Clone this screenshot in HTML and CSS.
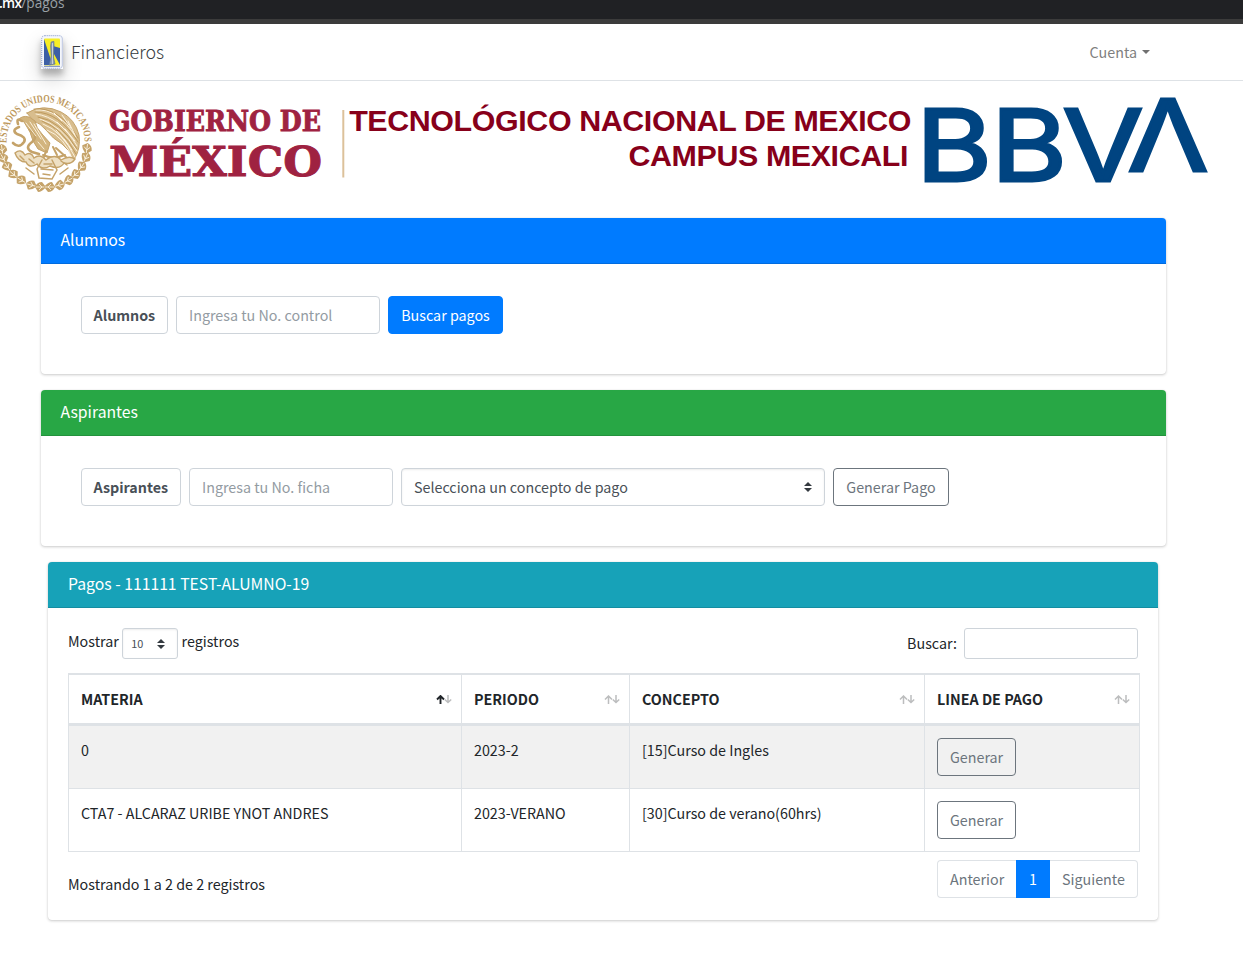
FILE: index.html
```html
<!DOCTYPE html>
<html lang="es">
<head>
<meta charset="utf-8">
<title>Financieros</title>
<link rel="stylesheet" href="styles.css">
</head>
<body>
<div class="browser-bar"><div class="url"><b>.mx</b><span>/pagos</span></div></div>
<nav class="navbar">
  <a class="brand">
    <svg class="brand-logo" viewBox="0 0 22 34" width="22" height="34">
      <rect width="22" height="34" rx="2" fill="#f4f6fb"/>
      <rect x=".7" y=".7" width="20.6" height="32.6" rx="3" fill="none" stroke="#8497c6" stroke-dasharray="1 1"/>
      <rect x="3" y="3.5" width="16" height="27" rx="1" fill="#f6ee25"/>
      <path d="M3 4 9 22 10 30H3zM12 11 19 13V30L13 19z" fill="#3c5fa5"/>
      <path d="M10.2 7 12.8 6.4 13 11 12.4 22 14 29 8 30 10.3 21 9.7 11z" fill="#8d9cae" stroke="#5470a0" stroke-width=".7"/>
      <path d="M11.5 8V29" stroke="#e6e9e5" stroke-width=".7"/>
      <path d="M3 31.3H19" stroke="#6c83bb" stroke-width="1"/>
    </svg>
    <span class="brand-text">Financieros</span>
  </a>
  <a class="account">Cuenta<i class="caret"></i></a>
</nav>

<header class="banner">
  <svg class="gob" viewBox="0 85 346 115" width="346" height="115">
    <defs>
      <path id="arc" d="M6.500 143L6.500 141A39 39 0 0 1 84.500 141L84.500 143"/>
      <g id="leaf"><path d="M0-5Q5-3 5 2L0 6Q-5 2-5-2Z" fill="#c5a36a"/><path d="M0-4V5M-3-1 0 2 3-1" stroke="#fff8e9" stroke-width=".8" fill="none"/></g>
    </defs>
    <text class="seal-text"><textPath href="#arc" textLength="125" lengthAdjust="spacingAndGlyphs">ESTADOS UNIDOS MEXICANOS</textPath></text>
    <g>
      <use href="#leaf" transform="translate(2 149) rotate(-8)"/><use href="#leaf" transform="translate(3 158) rotate(-30)"/>
      <use href="#leaf" transform="translate(7 166) rotate(-35)"/><use href="#leaf" transform="translate(13 174) rotate(-50)"/>
      <use href="#leaf" transform="translate(21 180) rotate(-60)"/><use href="#leaf" transform="translate(31 185) rotate(-75)"/>
      <use href="#leaf" transform="translate(40 187) rotate(-90)"/><use href="#leaf" transform="translate(50 187) rotate(90)"/>
      <use href="#leaf" transform="translate(60 185) rotate(75)"/><use href="#leaf" transform="translate(69 180) rotate(60)"/>
      <use href="#leaf" transform="translate(76 174) rotate(50)"/><use href="#leaf" transform="translate(82 166) rotate(35)"/>
      <use href="#leaf" transform="translate(86 157) rotate(25)"/><use href="#leaf" transform="translate(87 148) rotate(8)"/>
    </g>
    <g fill="none" stroke="#c5a36a" stroke-linecap="round">
      <path d="M27 113Q43 103 61 112 75 119 79 135 81 148 74 160 70 150 62 144 53 139 46 130 40 123 34 121 30 117 27 113Z" fill="#d8bd8d"/>
      <path d="M18 120Q22 115 29 117L35 121Q36 128 42 134L50 143 47 153 38 149Q32 141 30 132L24 122Z" fill="#d2b47e"/>
      <path d="M36 110Q58 108 76 137M36 114Q60 117 77 146M40 119Q61 125 77 151M43 124Q62 131 75 157M47 130Q65 137 73 160" stroke="#fff6e4" stroke-width=".9"/>
      <path d="M34 109Q59 106 78 138M35 112Q59 112 78 142M38 117Q60 120 77 149M42 121Q63 129 76 154" stroke="#b8914f" stroke-width=".8"/>
      <path d="M54 113 62 121M62 115 71 128M68 121 75 135M57 122 67 132M65 129 75 141M56 130 66 142M64 139 72 150" stroke="#fff6e4" stroke-width="1"/>
      <path d="M22 121Q16 117 18 124M19 127Q11 130 17 134 27 137 24 142 19 149 13 143M30 130Q39 136 32 142 24 148 32 152L39 154" stroke-width="2.600"/>
      <path d="M26 123 36 136M30 122 41 139M34 124 46 144M38 142 44 149" stroke="#fff6e4" stroke-width=".9"/>
      <path d="M46 151 44 157M53 147 57 155M56 148 66 157M43 155Q53 160 65 155" stroke-width="2"/>
      <path d="M15 153Q21 148 25 155 31 151 34 158 40 153 46 160 55 153 61 160 69 155 75 159 71 165 64 163 60 170 50 166 42 171 37 164 29 169 26 162 18 162 15 153Z" fill="#eee0c4" stroke-width="1.400"/>
      <path d="M20 156 24 160M29 159 34 163M42 160 37 169 39 178 52 179 57 170 52 160M44 164 52 164M41 169 53 170M43 174 50 175M61 161 67 165M26 168 34 174M60 174 68 168" stroke-width="1.500"/>
    </g>
    <g class="gob-text">
      <text x="109" y="130.500" font-size="27" textLength="212" lengthAdjust="spacingAndGlyphs">GOBIERNO DE</text>
      <text x="109" y="175.500" font-size="41" textLength="213" lengthAdjust="spacingAndGlyphs">MÉXICO</text>
    </g>
    <path d="M343.300 110V177.500" stroke="#dcc19a" stroke-width="2"/>
  </svg>
  <div class="campus">TECNOLÓGICO NACIONAL DE MEXICO<br><span class="campus-name">CAMPUS MEXICALI</span></div>
  <svg class="bbva" viewBox="917 85 300 115" width="300" height="115">
    <g class="bbva-text">
      <text x="916" y="180.700" textLength="76" lengthAdjust="spacingAndGlyphs">B</text>
      <text x="991" y="180.700" textLength="76" lengthAdjust="spacingAndGlyphs">B</text>
      <text x="1062.500" y="180.700" textLength="81" lengthAdjust="spacingAndGlyphs">V</text>
      <text x="1127.500" y="170.700" textLength="81" lengthAdjust="spacingAndGlyphs">Λ</text>
    </g>
  </svg>
</header>

<main class="content">
  <section class="card">
    <h3 class="card-header blue">Alumnos</h3>
    <div class="form-row">
      <span class="field tag alumnos-tag">Alumnos</span>
      <input class="field entry" placeholder="Ingresa tu No. control">
      <button class="field btn-primary">Buscar pagos</button>
    </div>
  </section>
  <section class="card">
    <h3 class="card-header green">Aspirantes</h3>
    <div class="form-row">
      <span class="field tag aspirantes-tag">Aspirantes</span>
      <input class="field entry" placeholder="Ingresa tu No. ficha">
      <div class="field select"><span>Selecciona un concepto de pago</span>
        <svg class="updown" viewBox="0 0 8 10" width="8" height="10"><path d="M4 0 8 4H0zM0 6H8L4 10z" fill="#343a40"/></svg></div>
      <button class="field btn-outline pay">Generar Pago</button>
    </div>
  </section>
  <section class="card payments">
    <h3 class="card-header teal">Pagos - 111111 TEST-ALUMNO-19</h3>
    <div class="card-body">
      <div class="tools">
        <div class="length"><span>Mostrar</span>
          <div class="mini-select"><span>10</span><svg class="updown" viewBox="0 0 8 10" width="8" height="10"><path d="M4 0 8 4H0zM0 6H8L4 10z" fill="#343a40"/></svg></div>
          <span>registros</span></div>
        <label class="search"><span>Buscar:</span><input class="search-input"></label>
      </div>
      <table class="grid">
        <colgroup><col class="c1"><col class="c2"><col class="c3"><col class="c4"></colgroup>
        <thead><tr>
          <th><div class="th"><span>MATERIA</span><svg class="sort asc" viewBox="0 0 16 9" width="16" height="9"><path class="up" d="M4.500 9V1.500M1 4.500 4.500 1 8 4.500"/><path class="down" d="M12 0V7M8.800 4.500 12 7.500 15.200 4.500"/></svg></div></th>
          <th><div class="th"><span>PERIODO</span><svg class="sort" viewBox="0 0 16 9" width="16" height="9"><path class="up" d="M4.500 9V1.500M1 4.500 4.500 1 8 4.500"/><path class="down" d="M12 0V7M8.800 4.500 12 7.500 15.200 4.500"/></svg></div></th>
          <th><div class="th"><span>CONCEPTO</span><svg class="sort" viewBox="0 0 16 9" width="16" height="9"><path class="up" d="M4.500 9V1.500M1 4.500 4.500 1 8 4.500"/><path class="down" d="M12 0V7M8.800 4.500 12 7.500 15.200 4.500"/></svg></div></th>
          <th><div class="th"><span>LINEA DE PAGO</span><svg class="sort" viewBox="0 0 16 9" width="16" height="9"><path class="up" d="M4.500 9V1.500M1 4.500 4.500 1 8 4.500"/><path class="down" d="M12 0V7M8.800 4.500 12 7.500 15.200 4.500"/></svg></div></th>
        </tr></thead>
        <tbody>
          <tr class="odd"><td>0</td><td>2023-2</td><td>[15]Curso de Ingles</td><td><button class="field btn-outline gen">Generar</button></td></tr>
          <tr><td>CTA7 - ALCARAZ URIBE YNOT ANDRES</td><td>2023-VERANO</td><td>[30]Curso de verano(60hrs)</td><td><button class="field btn-outline gen">Generar</button></td></tr>
        </tbody>
      </table>
      <div class="table-foot">
        <span class="info">Mostrando 1 a 2 de 2 registros</span>
        <div class="pager"><span class="page prev">Anterior</span><span class="page current">1</span><span class="page next">Siguiente</span></div>
      </div>
    </div>
  </section>
</main>
</body>
</html>
```
FILE: styles.css
```css
* { box-sizing: border-box; }
body {
  margin: 0;
  height: 959px;
  overflow: hidden;
  background: #fff;
  color: #212529;
  font: 14.3px/24px "Noto Sans CJK SC", "Noto Sans", sans-serif;
}
input, button { font: inherit; }
.browser-bar {
  height: 24px;
  overflow: hidden;
  background: #202124;
  border-bottom: 4px solid #3b3b3b;
  box-shadow: inset 0 -1px #3b3b3b;
  color: #9aa0a6;
  font: 13.7px/20px "Open Sans", sans-serif;
}
.url { display: flex; margin: -7.5px 0 0 -1px; }
.url b { color: #fff; font-weight: 600; letter-spacing: -.7px; }
.navbar {
  height: 57px;
  display: flex;
  align-items: center;
  justify-content: space-between;
  padding: 0 93px 0 41px;
  border-bottom: 1px solid #dee2e6;
}
.brand { display: flex; align-items: center; gap: 8px; }
.brand-logo { box-shadow: 0 10px 20px rgba(0,0,0,.19), 0 6px 6px rgba(0,0,0,.23); }
.brand-text { font-size: 17.9px; font-weight: 300; color: #343a40; padding-bottom: 2px; }
.account { display: flex; align-items: center; gap: 5px; color: #808080; }
.caret { border: 4px solid transparent; border-top-color: #707070; border-bottom: 0; }
.banner { height: 137px; padding-top: 4px; display: flex; align-items: flex-start; }
.gob, .bbva { flex: none; }
.seal-text { font: bold 10.5px "Liberation Serif", serif; fill: #bd985c; }
.gob-text { font-family: "DejaVu Serif", serif; font-weight: bold; fill: #9f2241; stroke: #9f2241; stroke-width: .9; }
.campus {
  width: 565px;
  padding-top: 18px;
  margin-right: 6px;
  text-align: right;
  white-space: nowrap;
  color: #87001a;
  font: bold 30.4px/35px "Liberation Sans", sans-serif;
  letter-spacing: -.39px;
}
.campus-name { margin-right: 3px; }
.bbva-text { font: 400 98.5px Inter, sans-serif; fill: #004481; stroke: #004481; stroke-width: 2.8; }
.content { padding-left: 41px; width: 1166px; display: flex; flex-direction: column; gap: 16px; }
.card {
  height: 156px;
  border-radius: 4px;
  box-shadow: 0 0 1px rgba(0,0,0,.125), 0 1px 3px rgba(0,0,0,.2);
}
.card-header {
  height: 46px;
  margin: 0;
  padding: 10px 19.5px;
  border-radius: 4px 4px 0 0;
  border-bottom: 1px solid rgba(0,0,0,.125);
  color: #fff;
  font-size: 15.75px;
  font-weight: 400;
}
.blue { background: #007bff; }
.green { background: #28a745; }
.teal { background: #17a2b8; padding-left: 20px; }
.form-row { padding: 32px 40px; display: flex; gap: 8px; }
.field {
  height: 38px;
  padding: 6px 12px;
  border: 1px solid #ced4da;
  border-radius: 4px;
  background: #fff;
  color: #495057;
  white-space: nowrap;
}
.tag { font-weight: 700; padding-left: 11.5px; }
.alumnos-tag { width: 87px; }
.aspirantes-tag { width: 100px; }
.entry { width: 204px; padding: 5px 12px 7px; }
.entry::placeholder { color: #939ba2; opacity: 1; }
.btn-primary { width: 115px; background: #007bff; border-color: #007bff; color: #fff; }
.btn-outline { background: transparent; border-color: #6c757d; color: #6c757d; }
.pay { width: 116px; }
.gen { width: 79px; display: block; }
.select {
  width: 424px;
  display: flex;
  justify-content: space-between;
  align-items: center;
  box-shadow: inset 0 1px 2px rgba(0,0,0,.075);
}
.payments { margin: 0 8px 0 7px; height: 358px; }
.card-body { padding: 20px; }
.tools { height: 45px; display: flex; justify-content: space-between; align-items: flex-start; }
.length { display: flex; gap: 3.4px; line-height: 25px; }
.mini-select {
  width: 56px;
  height: 31px;
  padding: 1px 12px 0 8px;
  display: flex;
  align-items: center;
  justify-content: space-between;
  border: 1px solid #ced4da;
  border-radius: 3px;
  box-shadow: inset 0 1px 2px rgba(0,0,0,.075);
  color: #495057;
  font-size: 10.9px;
}
.mini-select span { padding-bottom: 1px; }
.search { display: flex; align-items: center; gap: 7px; }
.search span { padding-bottom: 2px; }
.search-input { width: 174px; height: 31px; border: 1px solid #ced4da; border-radius: 3px; }
.grid {
  width: 1072px;
  table-layout: fixed;
  border-collapse: separate;
  border-spacing: 0;
  border-left: 1px solid #dee2e6;
  border-top: 2px solid #dee2e6;
}
.c1 { width: 393px; } .c2 { width: 168px; } .c3 { width: 295px; } .c4 { width: 215px; }
.grid th {
  height: 51px;
  padding: 0 9px 0 12px;
  text-align: left;
  border-right: 1px solid #dee2e6;
  border-bottom: 3px solid #dee2e6;
}
.th { display: flex; align-items: center; justify-content: space-between; }
.grid td {
  height: 63px;
  padding: 12px 12px 11px;
  vertical-align: top;
  border-right: 1px solid #dee2e6;
  border-bottom: 1px solid #dee2e6;
}
.odd { background: #f1f1f1; }
.sort { fill: none; stroke: #bcbdbe; stroke-width: 1.5; }
.asc .up { stroke: #212529; stroke-width: 1.9; }
.table-foot { display: flex; justify-content: space-between; padding-top: 8px; }
.info { padding-top: 12px; }
.pager { display: flex; height: 38px; }
.page { padding: 6px 12px; border: 1px solid #dee2e6; color: #6c757d; }
.prev { width: 80px; border-radius: 4px 0 0 4px; border-right: 0; }
.current { width: 34px; margin-left: -1px; background: #007bff; border-color: #007bff; color: #fff; }
.next { width: 88px; border-left: 0; border-radius: 0 4px 4px 0; }
```
